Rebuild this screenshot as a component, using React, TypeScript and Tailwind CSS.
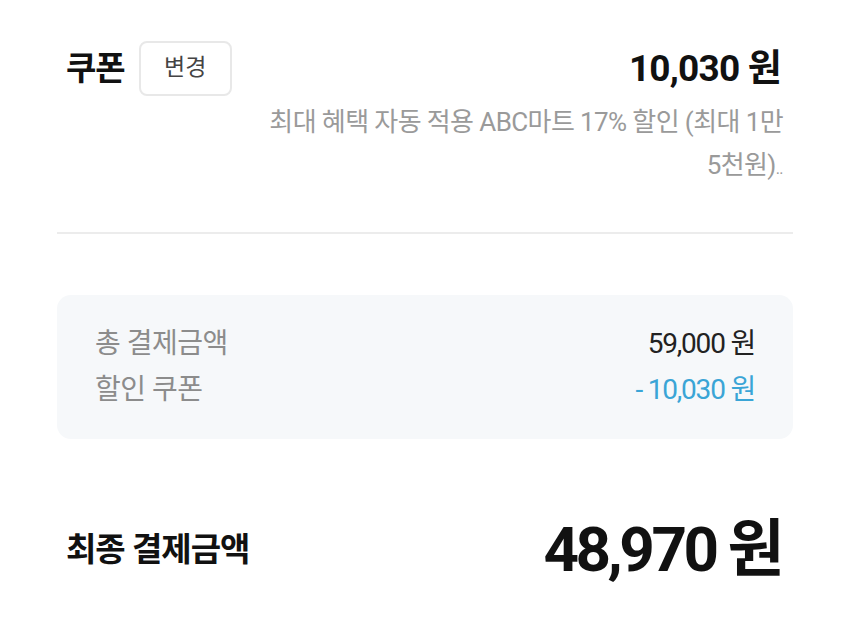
import React from "react";

export default function App() {
  return (
    <div
      className="w-[850px] h-[637px] bg-white overflow-hidden"
      style={{ fontFamily: "Roboto, 'Noto Sans CJK KR', sans-serif" }}
    >
      <div className="px-[57px]">
        <div className="flex items-center justify-between pt-[41px] pl-[9px] pr-[12px]">
          <div className="flex items-center gap-[14px]">
            <span className="text-[33px] font-bold text-[#111] leading-none tracking-[-1px]">쿠폰</span>
            <button className="w-[93px] h-[55px] rounded-[8px] border-2 border-[#e8e8e8] text-[23px] text-[#444] flex items-center justify-center">
              변경
            </button>
          </div>
          <span className="text-[37px] font-bold text-[#111] leading-none tracking-[-0.8px]">10,030 원</span>
        </div>
        <div className="text-right pr-[10px] mt-[5px] text-[26px] leading-[43px] text-[#9a9a9a] tracking-[-0.6px]">
          최대 혜택 자동 적용 ABC마트 17% 할인 (최대 1만
          <br />
          5천원)<span className="text-[16px]">..</span>
        </div>
        <div className="mt-[42px] h-[2px] bg-[#ececec]" />
        <div className="mt-[61px] h-[144px] rounded-[14px] bg-[#f6f8fa] px-[38px] flex flex-col justify-center gap-[8px]">
          <div className="flex items-center justify-between">
            <span className="text-[28px] text-[#8c8c8c] leading-[38px] tracking-[-0.5px]">총 결제금액</span>
            <span className="text-[28px] text-[#222] leading-[38px] tracking-[-1.2px]">59,000 원</span>
          </div>
          <div className="flex items-center justify-between">
            <span className="text-[28px] text-[#8c8c8c] leading-[38px] tracking-[-0.5px]">할인 쿠폰</span>
            <span className="text-[28px] text-[#3aa5d6] leading-[38px] tracking-[-1.2px]">- 10,030 원</span>
          </div>
        </div>
        <div className="mt-[80px] flex items-center justify-between pl-[9px] pr-[12px]">
          <span className="text-[33px] font-bold text-[#111] tracking-[-1px]">최종 결제금액</span>
          <span className="text-[62px] font-bold text-[#111] leading-none tracking-[-3.5px]">48,970 원</span>
        </div>
      </div>
    </div>
  );
}
